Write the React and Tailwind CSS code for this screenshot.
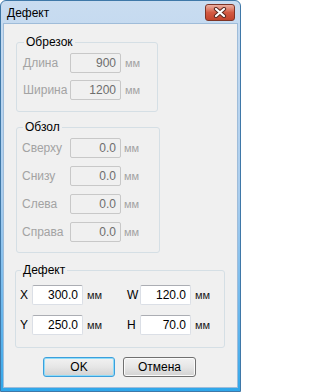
import React from "react";

const font = { fontFamily: '"Liberation Sans", "Noto Sans", sans-serif' };

function DisabledRow({ label, value, labelW, mmGap }) {
  return (
    <div className="flex items-center h-[20px]">
      <span className={`${labelW} text-[#a3a3a3]`}>{label}</span>
      <div className="w-[51px] h-[20px] rounded-[2px] border border-[#c8c8c8] bg-[#f0f0f0] flex items-center justify-end pr-[4px] text-[#6d6d6d]">
        {value}
      </div>
      <span className={`${mmGap} text-[#a3a3a3] text-[11px]`}>мм</span>
    </div>
  );
}

function EnabledField({ label, value, labelW }) {
  return (
    <div className="flex items-center h-[20px]">
      <span className={`${labelW} text-black`}>{label}</span>
      <div className="w-[51px] h-[20px] rounded-[2px] border border-[#dbdfe6] border-t-[#abadb3] bg-white flex items-center justify-end pr-[4px] text-black">
        {value}
      </div>
      <span className="ml-[4px] text-[#1a1a1a] text-[11px]">мм</span>
    </div>
  );
}

export default function App() {
  return (
    <div
      className="w-[241px] h-[392px] flex flex-col rounded-t-[6px] border border-[#3f78a8] bg-gradient-to-b from-[#c9dcf0] via-[#a9cdee] to-[#2fa7ea] text-[12px] leading-[16px]"
      style={font}
    >
      {/* Title bar */}
      <div className="h-[22px] flex items-start justify-between pl-[6px] pr-[5px] shrink-0">
        <span className="mt-[4px] text-[12px] text-black">Дефект</span>
        <div className="mt-[3px] w-[30px] h-[17px] rounded-[3px] border border-[#7d3426] bg-gradient-to-b from-[#eab0a2] via-[#d35a43] to-[#c2432c] flex items-center justify-center">
          <svg width="14" height="11" viewBox="0 0 14 11">
            <path d="M3 2 L11 9 M11 2 L3 9" stroke="#5a2a22" strokeWidth="4.2" strokeLinecap="round" />
            <path d="M3 2 L11 9 M11 2 L3 9" stroke="#ffffff" strokeWidth="2.2" strokeLinecap="round" />
          </svg>
        </div>
      </div>

      {/* Client area */}
      <div className="flex-1 mx-[2px] mb-[3px] bg-[#f0f0f0] border border-[#9fbcd9] flex flex-col">
        {/* Обрезок */}
        <fieldset className="ml-[12px] mt-[10px] w-[142px] border border-[#d5dfe5] rounded-[3px] pl-[6px] pb-[11px]">
          <legend className="ml-[1px] px-[2px] text-black">Обрезок</legend>
          <div className="mt-[3px] flex flex-col gap-[7px]">
            <DisabledRow label="Длина" value="900" labelW="w-[47px]" mmGap="ml-[4px]" />
            <DisabledRow label="Ширина" value="1200" labelW="w-[47px]" mmGap="ml-[4px]" />
          </div>
        </fieldset>

        {/* Обзол */}
        <fieldset className="ml-[12px] mt-[7px] w-[144px] border border-[#d5dfe5] rounded-[3px] pl-[5px] pb-[10px]">
          <legend className="ml-[1px] px-[2px] text-black">Обзол</legend>
          <div className="mt-[3px] flex flex-col gap-[8px]">
            <DisabledRow label="Сверху" value="0.0" labelW="w-[48px]" mmGap="ml-[3px]" />
            <DisabledRow label="Снизу" value="0.0" labelW="w-[48px]" mmGap="ml-[3px]" />
            <DisabledRow label="Слева" value="0.0" labelW="w-[48px]" mmGap="ml-[3px]" />
            <DisabledRow label="Справа" value="0.0" labelW="w-[48px]" mmGap="ml-[3px]" />
          </div>
        </fieldset>

        {/* Дефект */}
        <fieldset className="ml-[11px] mt-[9px] w-[210px] border border-[#d5dfe5] rounded-[3px] pl-[4px] pb-[12px]">
          <legend className="ml-[1px] px-[2px] text-black">Дефект</legend>
          <div className="mt-[7px] flex flex-col gap-[10px]">
            <div className="flex">
              <div className="w-[107px]"><EnabledField label="X" value="300.0" labelW="w-[12px]" /></div>
              <EnabledField label="W" value="120.0" labelW="w-[13px]" />
            </div>
            <div className="flex">
              <div className="w-[107px]"><EnabledField label="Y" value="250.0" labelW="w-[12px]" /></div>
              <EnabledField label="H" value="70.0" labelW="w-[13px]" />
            </div>
          </div>
        </fieldset>

        {/* Buttons */}
        <div className="mt-[9px] flex pl-[39px] gap-[8px]">
          <button className="w-[72px] h-[20px] rounded-[3px] border border-[#3c9fdc] shadow-[inset_0_0_0_1px_#8fdcf8] bg-gradient-to-b from-[#f2f2f2] via-[#e6e6e6] to-[#d2d2d2] text-black flex items-center justify-center">
            OK
          </button>
          <button className="w-[73px] h-[20px] rounded-[3px] border border-[#707070] shadow-[inset_0_0_0_1px_#fbfbfb] bg-gradient-to-b from-[#f2f2f2] via-[#e6e6e6] to-[#d2d2d2] text-black flex items-center justify-center">
            Отмена
          </button>
        </div>
      </div>
    </div>
  );
}
